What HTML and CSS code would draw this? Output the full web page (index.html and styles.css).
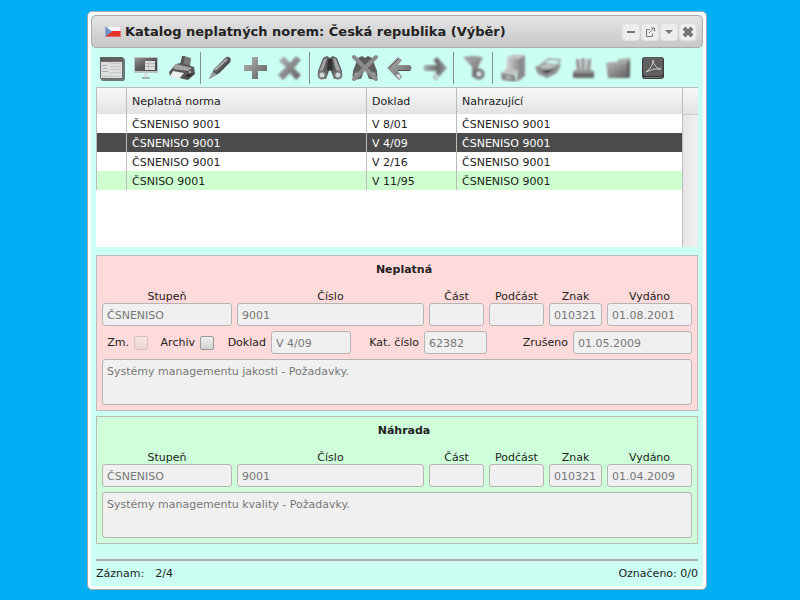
FILE: index.html
```html
<!DOCTYPE html>
<html lang="cs">
<head>
<meta charset="utf-8">
<title>Katalog neplatných norem</title>
<link rel="stylesheet" href="styles.css">
</head>
<body>
<svg class="defs" width="0" height="0" aria-hidden="true">
  <defs>
    <linearGradient id="dark" x1="0" y1="0" x2="1" y2="1"><stop offset="0" stop-color="#929292"/><stop offset=".5" stop-color="#5a5a5a"/><stop offset="1" stop-color="#444"/></linearGradient>
    <linearGradient id="mid" x1="0" y1="0" x2="1" y2="1"><stop offset="0" stop-color="#b4b4b4"/><stop offset=".5" stop-color="#8a8a8a"/><stop offset="1" stop-color="#606060"/></linearGradient>
    <linearGradient id="right" x1="0" y1="0" x2="1" y2="0"><stop offset="0" stop-color="#a6b0ae"/><stop offset=".6" stop-color="#6c6c6c"/><stop offset="1" stop-color="#a0a0a0"/></linearGradient>
    <linearGradient id="front" x1="0" y1="0" x2="1" y2="0"><stop offset="0" stop-color="#dadada"/><stop offset="1" stop-color="#8c8c8c"/></linearGradient>
    <filter id="soft" x="-20%" y="-20%" width="140%" height="140%"><feGaussianBlur stdDeviation=".8"/></filter>
    <filter id="edge" x="-20%" y="-20%" width="140%" height="140%"><feGaussianBlur stdDeviation=".45"/></filter>
  </defs>
</svg>
<main class="window">
  <header class="titlebar">
    <svg class="flag" viewBox="0 0 16 11" aria-hidden="true"><path fill="#f6f6f8" d="M0 0h16v6H0z"/><path fill="#e5332a" d="M0 5h16v6H0z"/><path fill="#6d93cb" d="M0 0l7 5.500L0 11z"/><path fill="none" stroke="#c9b3bd" stroke-opacity=".5" d="M.5.5h15v10H.5z"/></svg>
    <h1>Katalog neplatných norem: Česká republika (Výběr)</h1>
    <div class="controls">
      <button type="button" aria-label="Minimalizovat"><svg viewBox="0 0 16 16"><path fill="#777" d="M4 7h8v2H4z"/></svg></button>
      <button type="button" aria-label="Otevřít v novém okně"><svg viewBox="0 0 16 16" fill="none" stroke="#777"><path d="M7.500 5.500h-3v7h6v-3M7 9l4.500-4.500M9 4h3.500v3.500"/></svg></button>
      <button type="button" aria-label="Nabídka"><svg viewBox="0 0 16 16"><path fill="#777" d="M4 6h8l-4 4z"/></svg></button>
      <button type="button" aria-label="Zavřít"><svg viewBox="0 0 16 16"><path stroke="#777" stroke-width="4" d="M4 4l8 8M12 4l-8 8"/></svg></button>
    </div>
  </header>

  <nav class="toolbar" aria-label="Nástroje">
    <button type="button" aria-label="Formulář"><svg viewBox="0 0 28 28"><g filter="url(#edge)"><rect x="3" y="4" width="24" height="23" rx="2" fill="#6b7a77"/><rect x="2" y="3" width="23" height="22" rx="1" fill="#6a6a6a"/><path fill="#606060" d="M2 3h23v4H2z"/><path fill="#dedede" d="M3 8h21v16H3z"/><path stroke="#c6c6c6" d="M12 9.500h11M12 12.500h11M12 15.500h11M12 18.500h11M4 22.500h19"/><path stroke="#aaa" d="M4 11.500h5M5 14.500h4M4 17.500h6"/></g></svg></button>
    <button type="button" aria-label="Obrazovka"><svg viewBox="0 0 28 28"><g filter="url(#edge)"><path fill="#b9c4c2" d="M1 3h24v16H1z"/><path fill="url(#dark)" d="M2 4h22v13H2z"/><path fill="#dcdcdc" d="M12 7h10v9H12z"/><path stroke="#b8b8b8" d="M12 9.500h10M12 12.500h10M15.500 8v8"/><path fill="#d9e3e1" d="M11 19h4v4h-4z"/><path stroke="#a6b5b2" stroke-width="2" d="M9 24h8"/></g></svg></button>
    <button type="button" aria-label="Tisk"><svg viewBox="0 0 28 28"><g filter="url(#edge)"><path fill="#777" d="M16 2l7 2-1 9-8-1z"/><path fill="#555" d="M14 2h3l-2 10-3-1zM1 18l7-8 5-1 13 4 1 7-7 6-18-4z"/><path fill="#a4a4a4" d="M8 10l16 4-4 3-15-2z"/><path fill="#ececec" d="M5 17l11 2-5 6-9-3z"/><path stroke="#444" stroke-width="2" d="M17 22l4 1 5-4"/><circle cx="22" cy="18" r="1" fill="#ccc"/></g></svg></button>
    <span class="sep"></span>
    <button type="button" aria-label="Upravit"><svg viewBox="0 0 28 28"><g filter="url(#edge)"><path fill="url(#dark)" d="M2 25l5-10L19 3q4-1 5 3L11 20z"/><path stroke="#aaa" stroke-width="2" d="M8 16L20 5"/><path stroke="#505050" stroke-width="2" d="M11 19L23 7"/><path fill="#9aa5a2" d="M2 25l4-7 4 3z"/></g></svg></button>
    <button type="button" aria-label="Přidat"><svg viewBox="0 0 28 28"><path filter="url(#edge)" fill="url(#mid)" d="M10 3h6v8h9v6h-9v8h-6v-8H2v-6h8z"/></svg></button>
    <button type="button" aria-label="Smazat" disabled><svg viewBox="0 0 28 28"><path filter="url(#soft)" fill="url(#mid)" d="M2 7l5-5 6 7 6-7 5 4-7 8 7 7-5 5-6-7-7 7-5-5 8-8z"/></svg></button>
    <span class="sep"></span>
    <button type="button" aria-label="Hledat"><svg viewBox="0 0 28 28"><g filter="url(#edge)"><path fill="#5c5c5c" d="M7 4l4-2 3 2 3-2 4 2 5 13v6l-8 2-3-8h-2l-3 8-8-2v-6z"/><path fill="#a5a5a5" d="M8 5l3-1-4 12-4 2zM20 5l-3-1 3 12 5 2z"/><path fill="#303030" d="M12 5h4l1 11h-6z"/><circle cx="6" cy="21" r="3.500" fill="#cfdbd8" stroke="#777" stroke-width="2"/><circle cx="22" cy="21" r="3.500" fill="#cfdbd8" stroke="#777" stroke-width="2"/></g></svg></button>
    <button type="button" aria-label="Zrušit hledání"><svg viewBox="0 0 28 28"><g filter="url(#edge)"><path fill="#5c5c5c" d="M7 4l4-2 3 2 3-2 4 2 5 13v6l-8 2-3-8h-2l-3 8-8-2v-6z"/><circle cx="6" cy="21" r="3.500" fill="#b5b5b5" stroke="#666" stroke-width="2"/><circle cx="22" cy="21" r="3.500" fill="#b5b5b5" stroke="#666" stroke-width="2"/><path stroke="#8c8c8c" stroke-width="4" stroke-linecap="round" d="M3 3l22 22M25 3L3 25"/></g></svg></button>
    <button type="button" aria-label="Předchozí"><svg viewBox="0 0 28 28"><g filter="url(#edge)"><path fill="url(#mid)" d="M1 14L12 3l4 3-4 5h12q3 3 0 6H12l4 6-3 3z"/><path stroke="#505050" d="M12 16.500h12M12 5l-9 9"/><path fill="#dae3e1" d="M10 21l3-1 2 3-2 2z"/></g></svg></button>
    <button type="button" aria-label="Další" disabled><svg viewBox="0 0 28 28"><g filter="url(#soft)"><path fill="url(#right)" d="M26 14L16 3l-4 3 4 5H4q-3 3 0 6h12l-4 6 3 3z"/><path fill="#d9e2e0" d="M13 22l3-2 2 2-3 3z"/></g></svg></button>
    <span class="sep"></span>
    <button type="button" aria-label="Filtr" disabled><svg viewBox="0 0 28 28"><g filter="url(#soft)"><path fill="url(#mid)" d="M3 3h20l-5 10v12l-6-2V13z"/><ellipse cx="13" cy="4" rx="9" ry="2" fill="#9b9b9b"/><circle cx="19" cy="20" r="4" fill="#dce8e6" stroke="#707070" stroke-width="3"/></g></svg></button>
    <span class="sep"></span>
    <button type="button" aria-label="Kartotéka" disabled><svg viewBox="0 0 28 28"><g filter="url(#soft)"><path fill="#8b8b8b" d="M19 4l7-3v21l-8 6z"/><path fill="#c6c6c6" d="M8 3l8-3 10 1-6 4-12 0z"/><path fill="url(#front)" d="M8 4l12 1v11H7z"/><path fill="#c2c2c2" d="M2 19l6-4 12 1-3 4z"/><path fill="#858585" d="M2 19l14 2 1 7-14-2z"/><path stroke="#c8c8c8" stroke-width="2" d="M7 23l5 1"/></g></svg></button>
    <button type="button" aria-label="Košík" disabled><svg viewBox="0 0 28 28"><g filter="url(#soft)"><path fill="none" stroke="#a6aaa9" stroke-width="2" d="M6 12l8-7 12 1-2 5"/><path fill="#8c8c8c" d="M1 13l10-4 16 2-4 8-10 5-9-4z"/><path fill="#bdc2c1" d="M4 13l8-3 12 2-10 3z"/><path stroke="#b4b4b4" d="M5 18l8 2 10-5"/></g></svg></button>
    <button type="button" aria-label="Pořadače" disabled><svg viewBox="0 0 28 28"><g filter="url(#soft)"><path fill="#c0c8c6" d="M7 5h15v12H7z"/><path stroke="#858585" stroke-width="2" d="M8 5l2 12M14 4v13M21 5l-2 12"/><path fill="#686868" d="M4 17h21v7H4z"/><path fill="#969696" d="M6 16h17l2 3H4z"/></g></svg></button>
    <button type="button" aria-label="Složka" disabled><svg viewBox="0 0 28 28"><g filter="url(#soft)"><path fill="#a1a1a1" d="M5 8h8l2-3 11-1v18H5z"/><path fill="url(#mid)" d="M2 9h21l2 15H4z"/><path stroke="#bbb" d="M3 9h20M16 6h9"/><path fill="#5a5a5a" d="M23 9l3-4v18l-2 1z"/></g></svg></button>
    <button type="button" aria-label="Export PDF"><svg viewBox="0 0 28 28"><rect x="3" y="3" width="22" height="22" rx="3" fill="#3c3c3c"/><rect x="5" y="4" width="18" height="17" rx="1" fill="#5d5d5d" stroke="#707070"/><path fill="none" stroke="#ccc" d="M7 18q7-5 7-12 1 8 8 9-8-1-15 3z"/><path stroke="#777" d="M5 23.500h18"/></svg></button>
  </nav>

  <section class="grid" aria-label="Seznam norem">
    <table>
      <colgroup><col class="c-mark"><col class="c-norm"><col class="c-doc"><col></colgroup>
      <thead><tr><th scope="col" aria-label="Označení"></th><th scope="col">Neplatná norma</th><th scope="col">Doklad</th><th scope="col">Nahrazující</th></tr></thead>
      <tbody>
        <tr><td></td><td>ČSNENISO 9001</td><td>V 8/01</td><td>ČSNENISO 9001</td></tr>
        <tr class="selected"><td></td><td>ČSNENISO 9001</td><td>V 4/09</td><td>ČSNENISO 9001</td></tr>
        <tr><td></td><td>ČSNENISO 9001</td><td>V 2/16</td><td>ČSNENISO 9001</td></tr>
        <tr class="valid"><td></td><td>ČSNISO 9001</td><td>V 11/95</td><td>ČSNENISO 9001</td></tr>
      </tbody>
    </table>
    <div class="scroll"><div class="scroll-head"></div></div>
  </section>

  <section class="panel invalid">
    <h2>Neplatná</h2>
    <div class="fields">
      <label>Stupeň<input type="text" value="ČSNENISO" readonly></label>
      <label>Číslo<input type="text" value="9001" readonly></label>
      <label>Část<input type="text" readonly></label>
      <label>Podčást<input type="text" readonly></label>
      <label>Znak<input type="text" value="010321" readonly></label>
      <label>Vydáno<input type="text" value="01.08.2001" readonly></label>
    </div>
    <div class="details">
      <label for="zm">Zm.</label><input id="zm" type="checkbox" disabled>
      <label for="archiv">Archiv</label><input id="archiv" type="checkbox">
      <label for="doklad">Doklad</label><input id="doklad" type="text" value="V 4/09" readonly>
      <label for="kat">Kat. číslo</label><input id="kat" type="text" value="62382" readonly>
      <label for="zruseno">Zrušeno</label><input id="zruseno" type="text" value="01.05.2009" readonly>
    </div>
    <textarea aria-label="Název neplatné normy" readonly>Systémy managementu jakosti - Požadavky.</textarea>
  </section>

  <section class="panel replacement">
    <h2>Náhrada</h2>
    <div class="fields">
      <label>Stupeň<input type="text" value="ČSNENISO" readonly></label>
      <label>Číslo<input type="text" value="9001" readonly></label>
      <label>Část<input type="text" readonly></label>
      <label>Podčást<input type="text" readonly></label>
      <label>Znak<input type="text" value="010321" readonly></label>
      <label>Vydáno<input type="text" value="01.04.2009" readonly></label>
    </div>
    <textarea aria-label="Název náhrady" readonly>Systémy managementu kvality - Požadavky.</textarea>
  </section>

  <footer class="status">
    <div class="record"><span>Záznam:</span><span>2/4</span></div>
    <div>Označeno: 0/0</div>
  </footer>
</main>
</body>
</html>
```
FILE: styles.css
```css
* {
  box-sizing: border-box;
}

body {
  margin: 0;
  min-height: 100vh;
  display: flex;
  padding: 11px 93px 11px 87px;
  background: #00aef3;
  color: #222;
  font: 11px/16px Verdana, "DejaVu Sans", sans-serif;
}

button,
input,
textarea {
  font: inherit;
}

.defs {
  position: absolute;
}

.window {
  flex: 1;
  min-width: 0;
  display: flex;
  flex-direction: column;
  padding: 3px;
  background: #ccfff4;
  border: 1px solid #aaa;
  border-radius: 5px;
  box-shadow: inset 0 0 0 3px #fff;
}

.titlebar {
  display: flex;
  align-items: center;
  height: 33px;
  padding: 0 5px 0 13px;
  background: linear-gradient(#e4e4e4, #c8c8c8);
  border: 1px solid #aaa;
  border-radius: 5px;
}

.flag {
  width: 16px;
  height: 11px;
  margin-right: 4px;
}

.titlebar h1 {
  flex: 1;
  margin: 0;
  font-size: 13px;
  line-height: 16px;
  white-space: nowrap;
}

.controls {
  display: flex;
  gap: 1px;
}

.controls button {
  width: 18px;
  height: 18px;
  padding: 0;
  background: #ededed;
  border: 1px solid #e2e2e2;
  border-radius: 4px;
}

.controls svg {
  display: block;
  width: 16px;
  height: 16px;
}

.toolbar {
  display: flex;
  align-items: center;
  height: 39px;
  padding-left: 3px;
}

.toolbar button {
  display: flex;
  align-items: center;
  justify-content: center;
  width: 35px;
  height: 35px;
  padding: 0;
  background: none;
  border: 0;
}

.toolbar svg {
  width: 28px;
  height: 28px;
}

.sep {
  width: 1px;
  height: 32px;
  margin: 0 2px 0 1px;
  background: #7f8f8c;
}

.grid {
  flex: 1;
  display: flex;
  align-items: flex-start;
  min-height: 160px;
  margin: 0 5px 8px;
  background: #fff;
  border-top: 1px solid #bbb;
}

.grid table {
  flex: 1;
  table-layout: fixed;
  border-spacing: 0;
}

.c-mark {
  width: 31px;
}

.c-norm {
  width: 240px;
}

.c-doc {
  width: 90px;
}

.grid th {
  height: 26px;
  padding: 1px 5px 0;
  background: linear-gradient(#f8f8f8, #e3e3e3);
  border-right: 1px solid #bbb;
  font-weight: normal;
  text-align: left;
}

.grid td {
  height: 19px;
  padding: 2px 5px 0;
  border-right: 1px solid #bbb;
}

.grid th:first-child,
.grid td:first-child {
  border-left: 1px solid #bbb;
}

.grid th:last-child,
.grid td:last-child {
  border-right: 0;
}

.selected {
  background: #4b4b4b;
  color: #fff;
}

.valid {
  background: #ceffce;
}

.scroll {
  align-self: stretch;
  width: 16px;
  background: linear-gradient(90deg, #e6e6e6, #f0f0f0);
  border-left: 1px solid #bbb;
}

.scroll-head {
  height: 27px;
  background: linear-gradient(#f8f8f8, #e3e3e3);
  border-bottom: 1px solid #ccc;
}

.panel {
  display: flex;
  flex-direction: column;
  gap: 5px;
  margin: 0 5px 5px;
  padding: 5px;
  border: 1px solid #bbb;
}

.invalid {
  background: #ffdada;
}

.replacement {
  background: #ceffda;
}

.panel h2 {
  margin: 1px 0 7px;
  padding-left: 14px;
  font-size: 11px;
  line-height: 16px;
  text-align: center;
}

.fields {
  display: grid;
  grid-template-columns: 130fr 187fr 55fr 55fr 53fr 85fr;
  gap: 5px;
}

.fields label {
  min-width: 0;
  line-height: 13px;
  text-align: center;
}

input[type="text"],
textarea {
  display: block;
  width: 100%;
  min-width: 0;
  margin: 0;
  background: #f0f0f0;
  border: 1px solid #b5b5b5;
  border-radius: 3px;
  color: #777;
}

input[type="text"] {
  height: 23px;
  padding: 1px 4px 0;
}

textarea {
  height: 46px;
  padding: 4px 4px 2px;
  line-height: 16px;
  resize: none;
}

.details {
  display: grid;
  grid-template-columns: 27fr 14px 42fr 14px 47fr 80fr 63fr 63fr 76fr 119fr;
  align-items: center;
  gap: 5px;
}

.details label {
  padding-top: 1px;
  text-align: right;
  white-space: nowrap;
}

input[type="checkbox"] {
  appearance: none;
  width: 14px;
  height: 14px;
  margin: 0;
  background: linear-gradient(#eee, #d2d2d2);
  border: 1px solid #999;
  border-radius: 2px;
}

input[type="checkbox"]:disabled {
  opacity: 0.4;
}

.status {
  display: flex;
  justify-content: space-between;
  margin: 10px 5px 0;
  padding: 5px 0 4px;
  border-top: 2px solid #b3a9b0;
}

.record {
  display: flex;
  gap: 11px;
}
```
